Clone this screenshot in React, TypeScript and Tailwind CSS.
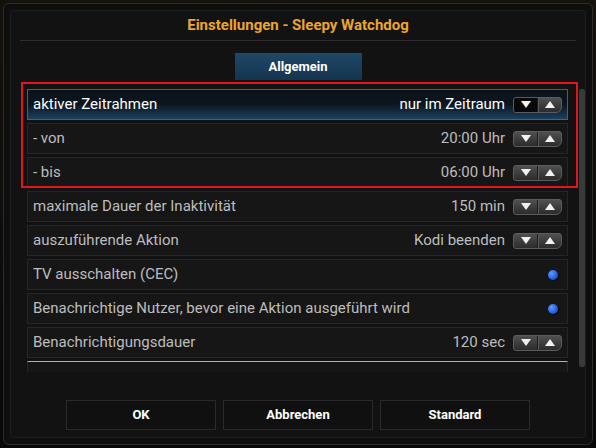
import React from "react";

const Spinner = ({ active }: { active?: boolean }) => (
  <div className="flex h-[16px] w-[49px] shrink-0 overflow-hidden rounded-[3px] rounded-br-[6px] border border-[#5c5c5c] bg-gradient-to-b from-[#505050] to-[#2c2c2c]">
    <div
      className={
        "flex h-full w-[24px] items-center justify-center border-r border-[#1c1c1c] " +
        (active ? "bg-[#080808]" : "")
      }
    >
      <svg width="10" height="7" viewBox="0 0 10 7">
        <polygon points="0,0 10,0 5,7" fill="#f2f2f2" />
      </svg>
    </div>
    <div className="flex h-full flex-1 items-center justify-center border-l border-[#5a5a5a]">
      <svg width="10" height="7" viewBox="0 0 10 7">
        <polygon points="0,7 10,7 5,0" fill="#f2f2f2" />
      </svg>
    </div>
  </div>
);

const Dot = () => (
  <div className="h-[10px] w-[10px] shrink-0 rounded-full bg-[radial-gradient(circle_at_35%_35%,#5f9bff,#1f5ee0_60%,#163f9a)] shadow-[1px_1px_1px_rgba(0,0,0,0.8)]" />
);

type RowProps = {
  label: string;
  value?: string;
  kind: "spin" | "dot";
  focused?: boolean;
};

const Row = ({ label, value, kind, focused }: RowProps) => (
  <div
    className={
      "flex h-[31px] shrink-0 items-center border pl-[5px] text-[15px] " +
      (kind === "dot" ? "pr-[9px] " : "pr-[5px] ") +
      (focused
        ? "border-[#2e6792] bg-gradient-to-b from-[#0b1118] via-[#0c1620] to-[#1a4163] text-white"
        : "border-[#262626] bg-[#161616] text-[#bdbdbd]")
    }
  >
    <span className="flex-1 truncate">{label}</span>
    {value && <span className="mr-[8px]">{value}</span>}
    {kind === "spin" ? <Spinner active={focused} /> : <Dot />}
  </div>
);

export default function App() {
  return (
    <div className="relative h-[448px] w-[596px] bg-gradient-to-b from-[#15110c] to-[#080808] p-[3px] font-['Roboto','Liberation_Sans',sans-serif]">
      <div className="h-[442px] rounded-[6px] border border-[#2c2c2c] bg-[#0e0e0e] p-[6px]">
        <div className="flex h-full flex-col rounded-[3px] border border-[#1e1e1e] bg-[#121212]">
          <div className="mx-[9px] flex h-[30px] shrink-0 items-center justify-center border-b border-[#2e2e2e] text-[15px] font-bold text-[#eca52d]">
            Einstellungen - Sleepy Watchdog
          </div>
          <div className="mt-[12px] flex justify-center">
            <div className="flex h-[27px] w-[127px] items-center justify-center bg-gradient-to-b from-[#1f4868] to-[#14344f] text-[13px] font-bold text-white">
              Allgemein
            </div>
          </div>
          <div className="mt-[9px] flex pl-[16px]">
            <div className="flex h-[283px] w-[541px] flex-col gap-[3px] overflow-hidden">
              <Row label="aktiver Zeitrahmen" value="nur im Zeitraum" kind="spin" focused />
              <Row label="- von" value="20:00 Uhr" kind="spin" />
              <Row label="- bis" value="06:00 Uhr" kind="spin" />
              <Row label="maximale Dauer der Inaktivität" value="150 min" kind="spin" />
              <Row label="auszuführende Aktion" value="Kodi beenden" kind="spin" />
              <Row label="TV ausschalten (CEC)" kind="dot" />
              <Row label="Benachrichtige Nutzer, bevor eine Aktion ausgeführt wird" kind="dot" />
              <Row label="Benachrichtigungsdauer" value="120 sec" kind="spin" />
              <div className="h-[31px] shrink-0 border border-[#262626] border-t-[#b0b0b0] bg-[#161616]" />
            </div>
            <div className="ml-[11px] h-[278px] w-[6px] rounded-[2px] bg-[#3a3a3a]" />
          </div>
          <div className="mt-[28px] flex gap-[7px] pl-[55px]">
            {["OK", "Abbrechen", "Standard"].map((t) => (
              <div
                key={t}
                className="flex h-[30px] w-[150px] items-center justify-center border border-[#2a2a2a] bg-[#101010] text-[13px] font-bold text-white"
              >
                {t}
              </div>
            ))}
          </div>
        </div>
      </div>
      <div className="absolute left-[21px] top-[82px] h-[106px] w-[557px] border-2 border-[#e0161c]" />
    </div>
  );
}
